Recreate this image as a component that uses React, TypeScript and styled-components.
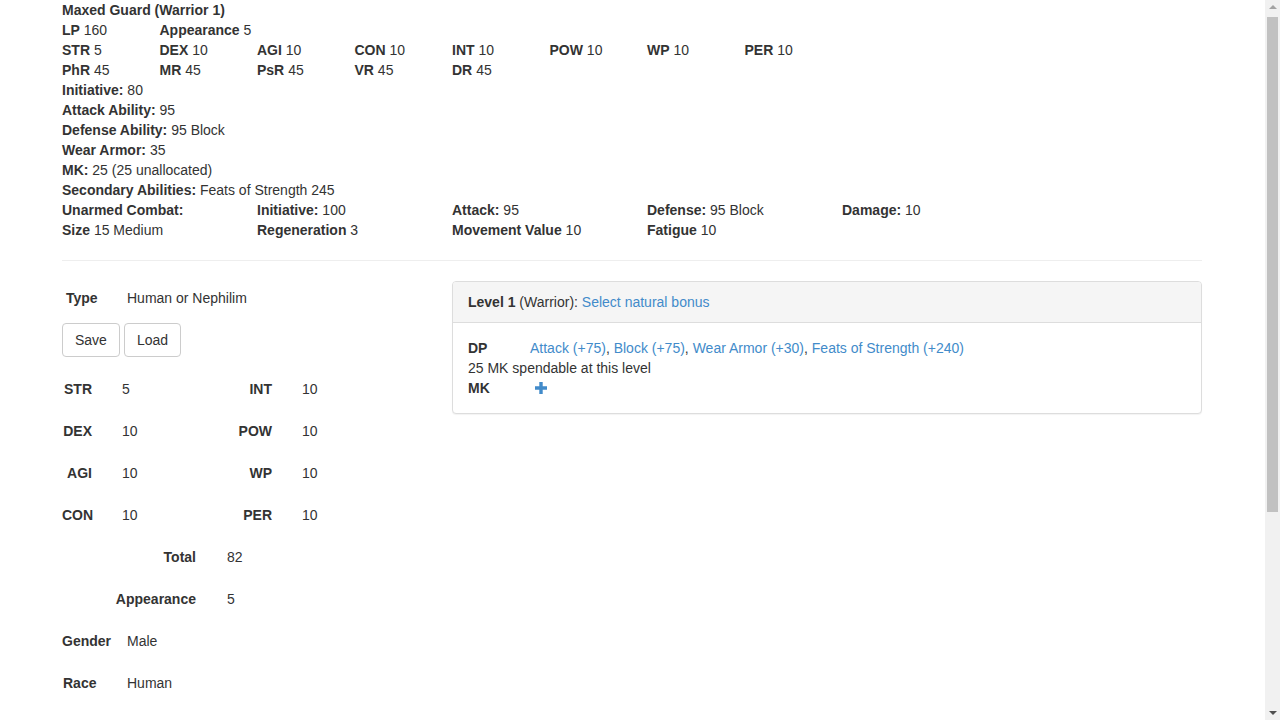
import React from "react";
import styled, { createGlobalStyle } from "styled-components";

const Global = createGlobalStyle`
  html, body { margin: 0; padding: 0; background: #fff; }
  body {
    font-family: "Liberation Sans", Arial, sans-serif;
    font-size: 14px;
    line-height: 20px;
    color: #333;
  }
  * { box-sizing: border-box; }
`;

const Page = styled.div`
  min-height: 998px;
  padding-right: 16px;
`;

const ScrollTrack = styled.div`
  position: fixed;
  top: 0;
  right: 0;
  width: 15px;
  height: 100vh;
  background: #f1f1f1;
  z-index: 10;
`;

const ScrollThumb = styled.div`
  position: absolute;
  top: 17px;
  left: 2px;
  width: 11px;
  height: 495px;
  background: #c1c1c1;
`;

const ScrollArrow = styled.div<{ $down?: boolean }>`
  position: absolute;
  left: 3.5px;
  width: 0;
  height: 0;
  border-left: 4px solid transparent;
  border-right: 4px solid transparent;
  ${(p) =>
    p.$down
      ? `bottom: 5px; border-top: 4px solid #505050;`
      : `top: 5px; border-bottom: 4px solid #a3a3a3;`}
`;

const Container = styled.div`
  width: 1170px;
  margin: 0 auto;
  padding: 0 15px;
`;

const Line = styled.div`
  line-height: 20px;
`;

const B = styled.b`
  font-weight: 700;
`;

const Cols = styled.div`
  display: flex;
  margin: 0 -15px;
`;

const Col = styled.div<{ $w: number }>`
  width: ${(p) => p.$w}px;
  padding: 0 15px;
  white-space: nowrap;
`;

const Rule = styled.hr`
  margin: 20px 0;
  border: 0;
  border-top: 1px solid #eee;
  height: 0;
`;

const Main = styled.div`
  display: flex;
  margin: 0 -15px;
`;

const LeftCol = styled.div`
  width: 390px;
  padding: 0 15px;
`;

const RightCol = styled.div`
  width: 780px;
  padding: 0 15px;
`;

const TypeRow = styled.div`
  display: flex;
  margin-top: 7px;
  height: 20px;
`;

const Buttons = styled.div`
  display: flex;
  gap: 4px;
  margin-top: 15px;
  margin-bottom: 11px;
`;

const Button = styled.button`
  font-family: inherit;
  font-size: 14px;
  line-height: 20px;
  color: #333;
  background: #fff;
  border: 1px solid #ccc;
  border-radius: 4px;
  padding: 6px 12px;
  cursor: pointer;
`;

const StatRow = styled.div`
  display: flex;
  align-items: center;
  height: 42px;
`;

const Label = styled.div<{ $w: number; $align?: string; $pl?: number }>`
  width: ${(p) => p.$w}px;
  text-align: ${(p) => p.$align || "left"};
  padding-left: ${(p) => p.$pl || 0}px;
  font-weight: 700;
  white-space: nowrap;
  flex: none;
`;

const Value = styled.div<{ $w?: number; $pl?: number }>`
  width: ${(p) => (p.$w ? `${p.$w}px` : "auto")};
  padding-left: ${(p) => p.$pl || 0}px;
  white-space: nowrap;
  flex: none;
`;

const Panel = styled.div`
  border: 1px solid #ddd;
  border-radius: 4px;
  background: #fff;
  box-shadow: 0 1px 1px rgba(0, 0, 0, 0.05);
`;

const PanelHeading = styled.div`
  background: #f5f5f5;
  border-bottom: 1px solid #ddd;
  border-radius: 3px 3px 0 0;
  padding: 10px 15px;
`;

const PanelBody = styled.div`
  padding: 15px;
`;

const Link = styled.a`
  color: #428bca;
  text-decoration: none;
  cursor: pointer;
`;

const PanelRow = styled.div`
  display: flex;
  align-items: center;
  height: 20px;
`;

const PanelLabel = styled.div`
  width: 62px;
  font-weight: 700;
  flex: none;
`;

const PlusIcon = styled.svg`
  margin-left: 5px;
  display: block;
`;

const Plus = () => (
  <PlusIcon width="12" height="12" viewBox="0 0 12 12">
    <path d="M4.3 0h3.4v4.3H12v3.4H7.7V12H4.3V7.7H0V4.3h4.3z" fill="#428bca" />
  </PlusIcon>
);

const stats = [
  ["STR", "5", "INT", "10"],
  ["DEX", "10", "POW", "10"],
  ["AGI", "10", "WP", "10"],
  ["CON", "10", "PER", "10"],
];

const primary = [
  ["STR", "5"],
  ["DEX", "10"],
  ["AGI", "10"],
  ["CON", "10"],
  ["INT", "10"],
  ["POW", "10"],
  ["WP", "10"],
  ["PER", "10"],
];

const resist = [
  ["PhR", "45"],
  ["MR", "45"],
  ["PsR", "45"],
  ["VR", "45"],
  ["DR", "45"],
];

const dpLinks = [
  "Attack (+75)",
  "Block (+75)",
  "Wear Armor (+30)",
  "Feats of Strength (+240)",
];

export default function App() {
  return (
    <Page>
      <Global />
      <ScrollTrack>
        <ScrollArrow />
        <ScrollThumb />
        <ScrollArrow $down />
      </ScrollTrack>
      <Container>
        <Line>
          <B>Maxed Guard (Warrior 1)</B>
        </Line>
        <Cols>
          <Col $w={97.5}>
            <B>LP</B> 160
          </Col>
          <Col $w={97.5}>
            <B>Appearance</B> 5
          </Col>
        </Cols>
        <Cols>
          {primary.map(([k, v]) => (
            <Col $w={97.5} key={k}>
              <B>{k}</B> {v}
            </Col>
          ))}
        </Cols>
        <Cols>
          {resist.map(([k, v]) => (
            <Col $w={97.5} key={k}>
              <B>{k}</B> {v}
            </Col>
          ))}
        </Cols>
        <Line>
          <B>Initiative:</B> 80
        </Line>
        <Line>
          <B>Attack Ability:</B> 95
        </Line>
        <Line>
          <B>Defense Ability:</B> 95 Block
        </Line>
        <Line>
          <B>Wear Armor:</B> 35
        </Line>
        <Line>
          <B>MK:</B> 25 (25 unallocated)
        </Line>
        <Line>
          <B>Secondary Abilities:</B> Feats of Strength 245
        </Line>
        <Cols>
          <Col $w={195}>
            <B>Unarmed Combat:</B>
          </Col>
          <Col $w={195}>
            <B>Initiative:</B> 100
          </Col>
          <Col $w={195}>
            <B>Attack:</B> 95
          </Col>
          <Col $w={195}>
            <B>Defense:</B> 95 Block
          </Col>
          <Col $w={195}>
            <B>Damage:</B> 10
          </Col>
        </Cols>
        <Cols>
          <Col $w={195}>
            <B>Size</B> 15 Medium
          </Col>
          <Col $w={195}>
            <B>Regeneration</B> 3
          </Col>
          <Col $w={195}>
            <B>Movement Value</B> 10
          </Col>
          <Col $w={195}>
            <B>Fatigue</B> 10
          </Col>
        </Cols>
        <Rule />
        <Main>
          <LeftCol>
            <TypeRow>
              <Label $w={65} $pl={4}>
                Type
              </Label>
              <Value>Human or Nephilim</Value>
            </TypeRow>
            <Buttons>
              <Button>Save</Button>
              <Button>Load</Button>
            </Buttons>
            {stats.map(([a, av, b, bv]) => (
              <StatRow key={a}>
                <Label $w={30} $align="right">
                  {a}
                </Label>
                <Value $w={120} $pl={30}>
                  {av}
                </Value>
                <Label $w={60} $align="right">
                  {b}
                </Label>
                <Value $pl={30}>{bv}</Value>
              </StatRow>
            ))}
            <StatRow>
              <Label $w={134} $align="right">
                Total
              </Label>
              <Value $pl={31}>82</Value>
            </StatRow>
            <StatRow>
              <Label $w={134} $align="right">
                Appearance
              </Label>
              <Value $pl={31}>5</Value>
            </StatRow>
            <StatRow>
              <Label $w={65}>Gender</Label>
              <Value>Male</Value>
            </StatRow>
            <StatRow>
              <Label $w={65} $pl={1}>
                Race
              </Label>
              <Value>Human</Value>
            </StatRow>
          </LeftCol>
          <RightCol>
            <Panel>
              <PanelHeading>
                <B>Level 1</B> (Warrior): <Link>Select natural bonus</Link>
              </PanelHeading>
              <PanelBody>
                <PanelRow>
                  <PanelLabel>DP</PanelLabel>
                  <span>
                    {dpLinks.map((l, i) => (
                      <React.Fragment key={l}>
                        {i > 0 && ", "}
                        <Link>{l}</Link>
                      </React.Fragment>
                    ))}
                  </span>
                </PanelRow>
                <Line>25 MK spendable at this level</Line>
                <PanelRow>
                  <PanelLabel>MK</PanelLabel>
                  <Plus />
                </PanelRow>
              </PanelBody>
            </Panel>
          </RightCol>
        </Main>
      </Container>
    </Page>
  );
}
